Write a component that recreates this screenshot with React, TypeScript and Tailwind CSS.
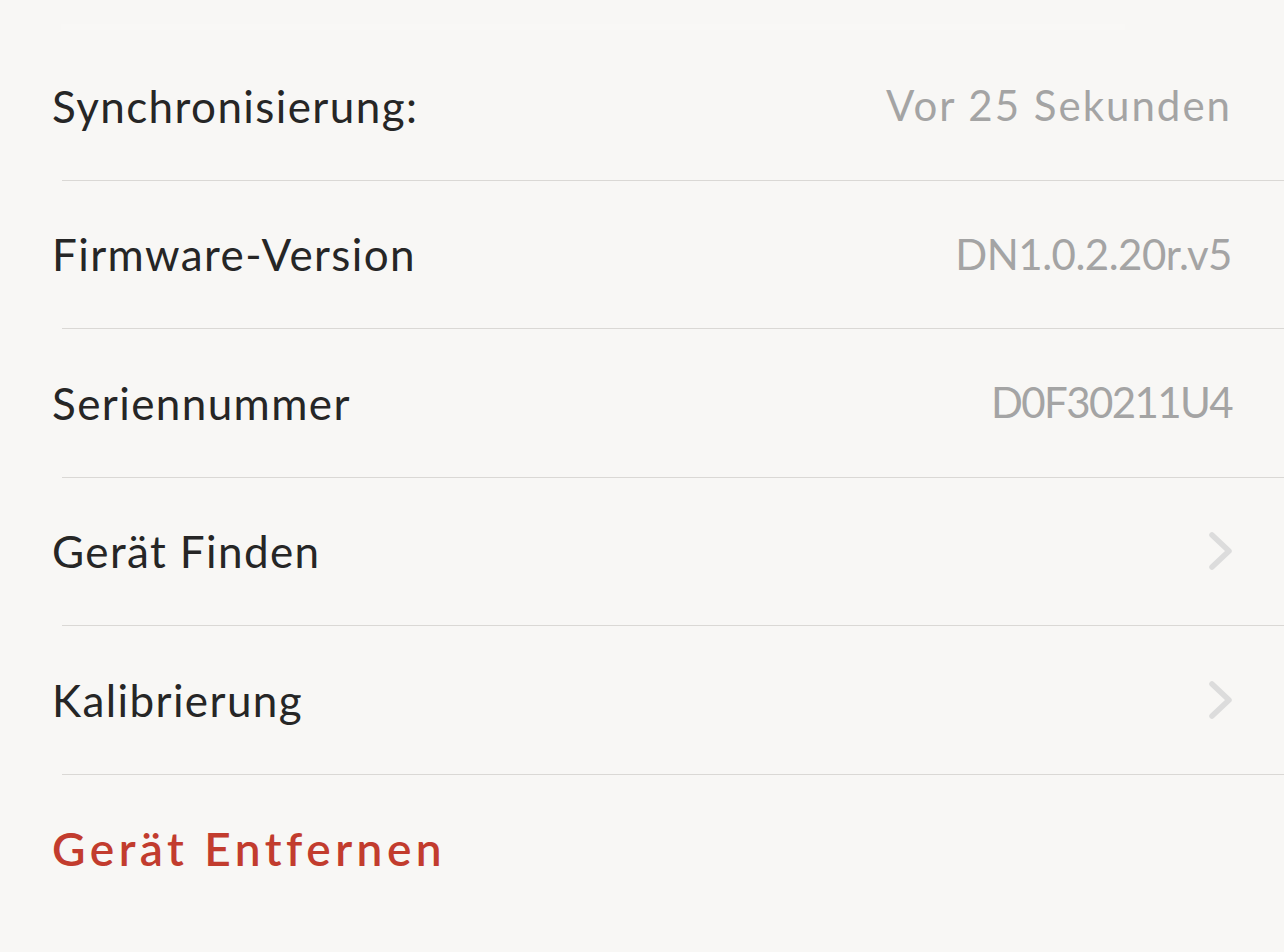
const rows: { label: string; value?: string; track?: string; chevron?: boolean }[] = [
  { label: "Synchronisierung:", value: "Vor 25 Sekunden", track: "tracking-[2px]" },
  { label: "Firmware-Version", value: "DN1.0.2.20r.v5", track: "tracking-[-0.5px]" },
  { label: "Seriennummer", value: "D0F30211U4", track: "tracking-[-1.6px]" },
  { label: "Gerät Finden", chevron: true },
  { label: "Kalibrierung", chevron: true },
];

const Chevron = () => (
  <svg className="w-[26px] h-[40px] mr-[-2px]" viewBox="0 0 26 40" fill="none">
    <path
      d="M4 4l17 16L4 36"
      stroke="#dcdcdc"
      strokeWidth={5.5}
      strokeLinecap="round"
      strokeLinejoin="round"
    />
  </svg>
);

export default function App() {
  return (
    <div
      className="min-h-[952px] w-full bg-[#f8f7f5] pt-[24px]"
      style={{ fontFamily: "Lato, 'Noto Sans', sans-serif" }}
    >
      <div className="ml-[61px] w-[1064px] h-[6px] mb-[2px] bg-[#f9f8f6]" />
      {rows.map((r) => (
        <div key={r.label}>
          <div className="h-[147.5px] flex items-center justify-between pl-[52px] pr-[52px]">
            <span className="text-[44px] text-[#262626] tracking-[1.4px]">{r.label}</span>
            {r.value && (
              <span className={`text-[42px] text-[#a4a4a4] ${r.track}`}>{r.value}</span>
            )}
            {r.chevron && <Chevron />}
          </div>
          <div className="ml-[62px] h-px bg-[#dad8d5]" />
        </div>
      ))}
      <div className="h-[148px] flex items-center pl-[52px]">
        <span className="text-[46px] font-semibold text-[#c23c2e] tracking-[4.5px]">
          Gerät Entfernen
        </span>
      </div>
    </div>
  );
}
